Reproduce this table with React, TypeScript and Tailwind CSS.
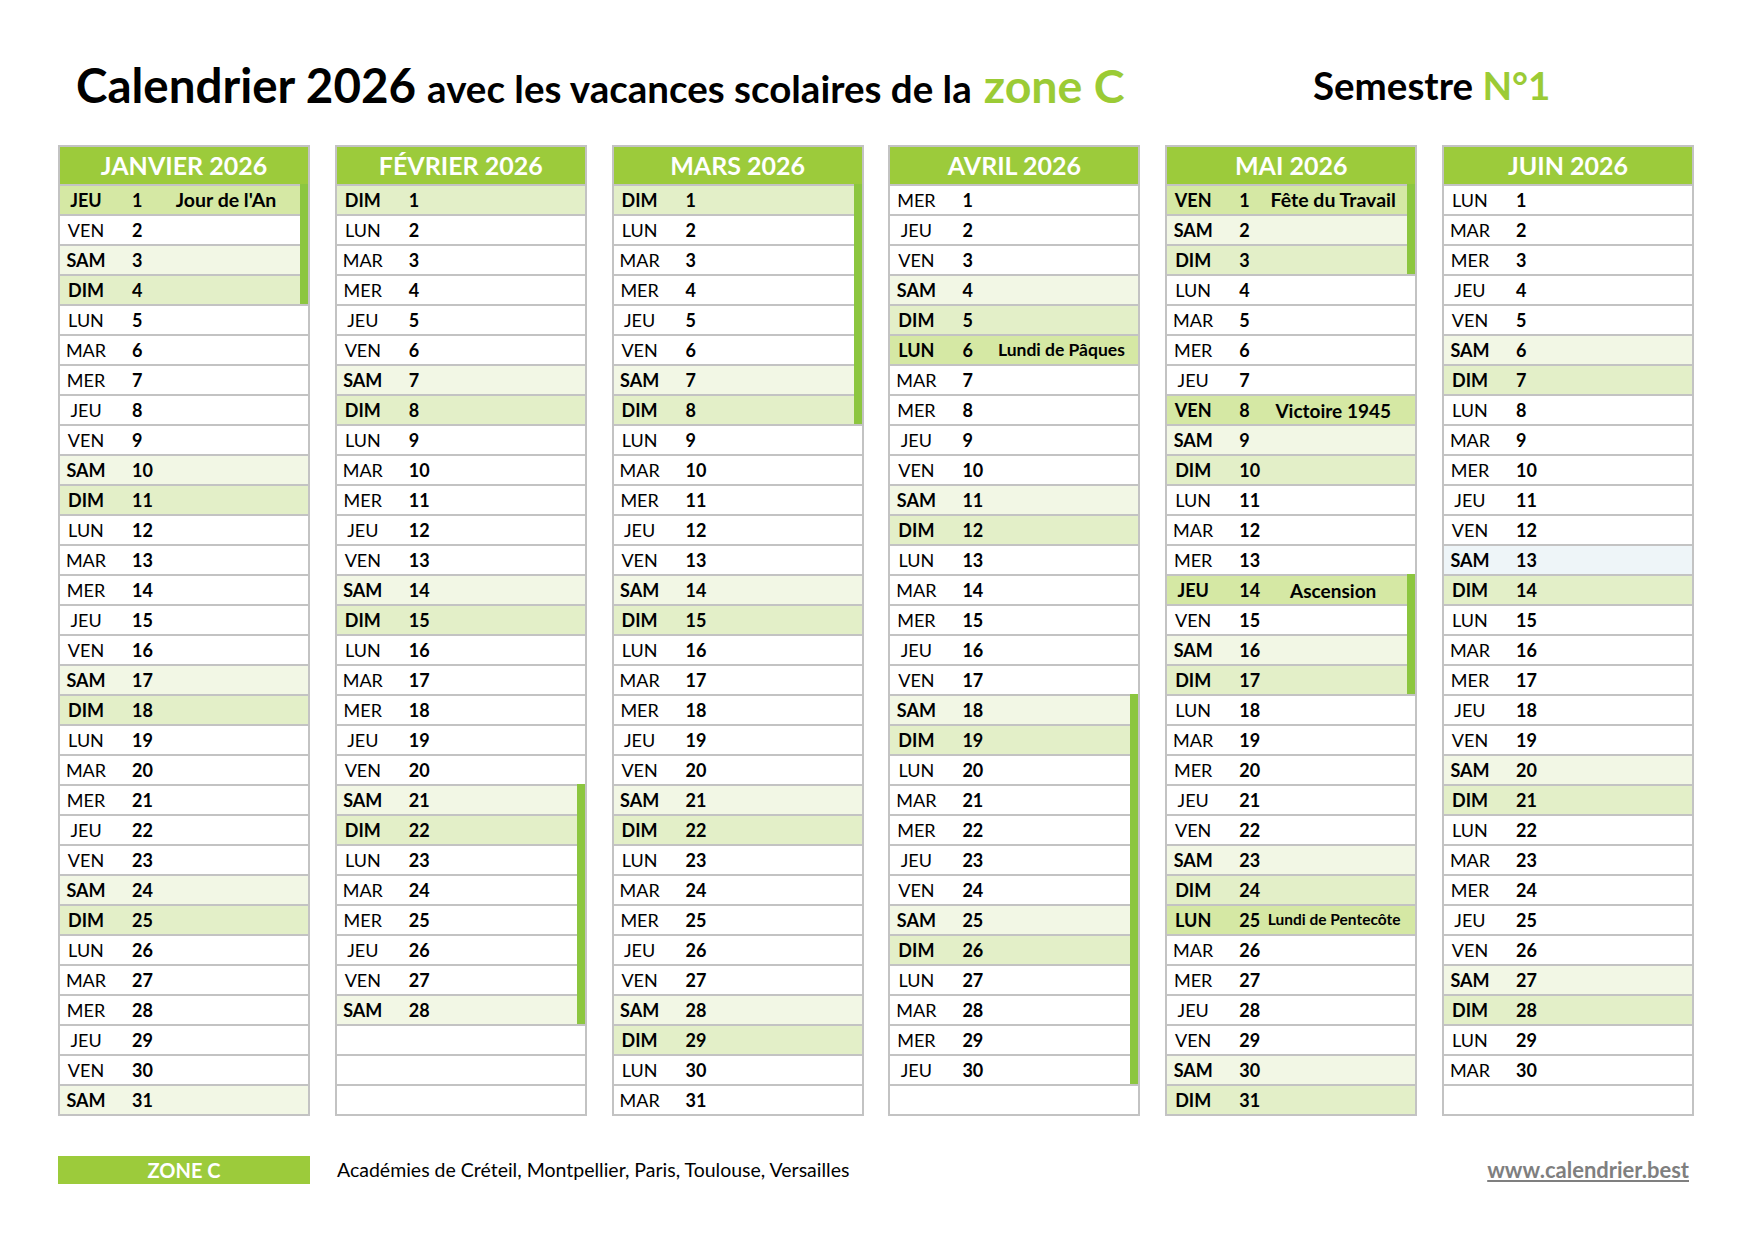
import React from "react";

const DAY_NAMES = ["DIM", "LUN", "MAR", "MER", "JEU", "VEN", "SAM"];

const months = [
  { label: "JANVIER 2026", index: 0, length: 31, vacations: [[1, 4]] },
  { label: "FÉVRIER 2026", index: 1, length: 28, vacations: [[21, 28]] },
  { label: "MARS 2026", index: 2, length: 31, vacations: [[1, 8]] },
  { label: "AVRIL 2026", index: 3, length: 30, vacations: [[18, 30]] },
  { label: "MAI 2026", index: 4, length: 31, vacations: [[1, 3], [14, 17]] },
  { label: "JUIN 2026", index: 5, length: 30, vacations: [] as number[][] },
];

// size: font size class for the holiday label, pad: right padding of the label cell
const holidays: Record<string, { name: string; size: string; pad: string }> = {
  "0-1": { name: "Jour de l'An", size: "text-[19.5px]", pad: "pr-[10px]" },
  "3-6": { name: "Lundi de Pâques", size: "text-[17.5px]", pad: "pr-0" },
  "4-1": { name: "Fête du Travail", size: "text-[19.5px]", pad: "pr-[10px]" },
  "4-8": { name: "Victoire 1945", size: "text-[19px]", pad: "pr-[10px]" },
  "4-14": { name: "Ascension", size: "text-[19px]", pad: "pr-[10px]" },
  "4-25": { name: "Lundi de Pentecôte", size: "text-[15.5px]", pad: "pr-[8px]" },
};

function DayRow({ month, day, vacations }: { month: number; day: number | null; vacations: number[][] }) {
  if (day === null) {
    return <div className="h-[30px] border-t-2 border-[#c3c3c3] bg-white" />;
  }
  const dow = new Date(2026, month, day).getDay();
  const name = DAY_NAMES[dow];
  const holiday = holidays[`${month}-${day}`];
  const onVacation = vacations.some(([a, b]) => day >= a && day <= b);
  const oddBlue = month === 5 && day === 13;

  let bg = "bg-white";
  if (holiday) bg = "bg-[#d5e8a4]";
  else if (oddBlue) bg = "bg-[#eef5f8]";
  else if (dow === 0) bg = "bg-[#e3efc8]";
  else if (dow === 6) bg = "bg-[#f2f7e5]";

  const boldName = holiday || dow === 0 || dow === 6;

  return (
    <div className={`relative flex h-[30px] items-center border-t-2 border-[#c3c3c3] text-[18px] leading-none text-black ${bg}`}>
      <div className={`w-[52px] text-center ${boldName ? "font-bold" : ""}`}>{name}</div>
      <div className="w-[42px] pl-[20px] font-bold">{day}</div>
      {holiday && (
        <div className={`flex-1 whitespace-nowrap text-center font-bold ${holiday.pad} ${holiday.size}`}>
          {holiday.name}
        </div>
      )}
      {onVacation && <div className="absolute -top-[2px] bottom-0 right-0 w-2 bg-[#8cc63f]" />}
    </div>
  );
}

function MonthColumn({ label, index, length, vacations }: (typeof months)[number]) {
  const days: (number | null)[] = Array.from({ length: 31 }, (_, i) => (i < length ? i + 1 : null));
  return (
    <div className="w-[252px] border-2 border-[#c3c3c3] bg-white">
      <div className="flex h-[37px] items-center justify-center bg-[#9ccb3b] text-[25px] font-bold leading-none text-white">
        {label}
      </div>
      {days.map((d, i) => (
        <DayRow key={i} month={index} day={d} vacations={vacations} />
      ))}
    </div>
  );
}

export default function App() {
  return (
    <div className="h-[1240px] w-[1754px] bg-white font-['Lato',sans-serif] text-black">
      <header className="flex h-[145px] pt-[61px] leading-none">
        <div className="flex w-[1313px] items-baseline pl-[76px]">
          <span className="text-[47.5px] font-bold">Calendrier 2026</span>
          <span className="ml-[11px] text-[38.5px] font-bold">avec les vacances scolaires de la</span>
          <span className="ml-[12px] text-[46.5px] font-bold text-[#9bcb35]">zone C</span>
        </div>
        <div className="mt-[5px] whitespace-nowrap text-[38.5px] font-bold">
          Semestre <span className="text-[#9bcb35]">N°1</span>
        </div>
      </header>

      <div className="flex gap-[24.8px] pl-[58px]">
        {months.map((m) => (
          <MonthColumn key={m.label} {...m} />
        ))}
      </div>

      <footer className="mt-[37px] flex items-center pl-[58px]">
        <div className="flex h-[28px] w-[252px] items-center justify-center bg-[#9ccb3b] text-[20px] font-bold text-white">
          ZONE C
        </div>
        <div className="ml-[27px] text-[19.5px]">Académies de Créteil, Montpellier, Paris, Toulouse, Versailles</div>
        <a className="ml-auto pr-[65px] text-[22px] font-bold text-[#7f7f7f] underline">www.calendrier.best</a>
      </footer>
    </div>
  );
}
